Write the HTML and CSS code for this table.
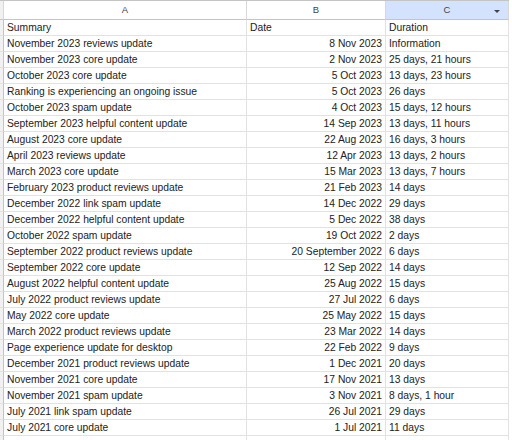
FILE: index.html
```html
<!DOCTYPE html>
<html>
<head>
<meta charset="utf-8">
<link rel="stylesheet" href="styles.css">
</head>
<body>
<div class="sheet">
  <div class="row head">
    <div class="cell stub"></div>
    <div class="cell a">A</div>
    <div class="cell b">B</div>
    <div class="cell c sel">C<span class="arrow"></span></div>
  </div>
  <div class="row"><div class="cell stub"></div><div class="cell a">Summary</div><div class="cell b left">Date</div><div class="cell c">Duration</div></div>
  <div class="row"><div class="cell stub"></div><div class="cell a">November 2023 reviews update</div><div class="cell b">8 Nov 2023</div><div class="cell c">Information</div></div>
  <div class="row"><div class="cell stub"></div><div class="cell a">November 2023 core update</div><div class="cell b">2 Nov 2023</div><div class="cell c">25 days, 21 hours</div></div>
  <div class="row"><div class="cell stub"></div><div class="cell a">October 2023 core update</div><div class="cell b">5 Oct 2023</div><div class="cell c">13 days, 23 hours</div></div>
  <div class="row"><div class="cell stub"></div><div class="cell a">Ranking is experiencing an ongoing issue</div><div class="cell b">5 Oct 2023</div><div class="cell c">26 days</div></div>
  <div class="row"><div class="cell stub"></div><div class="cell a">October 2023 spam update</div><div class="cell b">4 Oct 2023</div><div class="cell c">15 days, 12 hours</div></div>
  <div class="row"><div class="cell stub"></div><div class="cell a">September 2023 helpful content update</div><div class="cell b">14 Sep 2023</div><div class="cell c">13 days, 11 hours</div></div>
  <div class="row"><div class="cell stub"></div><div class="cell a">August 2023 core update</div><div class="cell b">22 Aug 2023</div><div class="cell c">16 days, 3 hours</div></div>
  <div class="row"><div class="cell stub"></div><div class="cell a">April 2023 reviews update</div><div class="cell b">12 Apr 2023</div><div class="cell c">13 days, 2 hours</div></div>
  <div class="row"><div class="cell stub"></div><div class="cell a">March 2023 core update</div><div class="cell b">15 Mar 2023</div><div class="cell c">13 days, 7 hours</div></div>
  <div class="row"><div class="cell stub"></div><div class="cell a">February 2023 product reviews update</div><div class="cell b">21 Feb 2023</div><div class="cell c">14 days</div></div>
  <div class="row"><div class="cell stub"></div><div class="cell a">December 2022 link spam update</div><div class="cell b">14 Dec 2022</div><div class="cell c">29 days</div></div>
  <div class="row"><div class="cell stub"></div><div class="cell a">December 2022 helpful content update</div><div class="cell b">5 Dec 2022</div><div class="cell c">38 days</div></div>
  <div class="row"><div class="cell stub"></div><div class="cell a">October 2022 spam update</div><div class="cell b">19 Oct 2022</div><div class="cell c">2 days</div></div>
  <div class="row"><div class="cell stub"></div><div class="cell a">September 2022 product reviews update</div><div class="cell b">20 September 2022</div><div class="cell c">6 days</div></div>
  <div class="row"><div class="cell stub"></div><div class="cell a">September 2022 core update</div><div class="cell b">12 Sep 2022</div><div class="cell c">14 days</div></div>
  <div class="row"><div class="cell stub"></div><div class="cell a">August 2022 helpful content update</div><div class="cell b">25 Aug 2022</div><div class="cell c">15 days</div></div>
  <div class="row"><div class="cell stub"></div><div class="cell a">July 2022 product reviews update</div><div class="cell b">27 Jul 2022</div><div class="cell c">6 days</div></div>
  <div class="row"><div class="cell stub"></div><div class="cell a">May 2022 core update</div><div class="cell b">25 May 2022</div><div class="cell c">15 days</div></div>
  <div class="row"><div class="cell stub"></div><div class="cell a">March 2022 product reviews update</div><div class="cell b">23 Mar 2022</div><div class="cell c">14 days</div></div>
  <div class="row"><div class="cell stub"></div><div class="cell a">Page experience update for desktop</div><div class="cell b">22 Feb 2022</div><div class="cell c">9 days</div></div>
  <div class="row"><div class="cell stub"></div><div class="cell a">December 2021 product reviews update</div><div class="cell b">1 Dec 2021</div><div class="cell c">20 days</div></div>
  <div class="row"><div class="cell stub"></div><div class="cell a">November 2021 core update</div><div class="cell b">17 Nov 2021</div><div class="cell c">13 days</div></div>
  <div class="row"><div class="cell stub"></div><div class="cell a">November 2021 spam update</div><div class="cell b">3 Nov 2021</div><div class="cell c">8 days, 1 hour</div></div>
  <div class="row"><div class="cell stub"></div><div class="cell a">July 2021 link spam update</div><div class="cell b">26 Jul 2021</div><div class="cell c">29 days</div></div>
  <div class="row"><div class="cell stub"></div><div class="cell a">July 2021 core update</div><div class="cell b">1 Jul 2021</div><div class="cell c">11 days</div></div>
  <div class="row"><div class="cell stub"></div><div class="cell a"></div><div class="cell b"></div><div class="cell c"></div></div>
</div>
</body>
</html>
```
FILE: styles.css
```css
html, body {
  margin: 0;
  padding: 0;
  background: #ffffff;
}
body {
  font-family: "Liberation Sans", Arial, sans-serif;
  font-size: 10.3px;
  color: #222222;
  overflow: hidden;
}
.sheet {
  border-top: 1px solid #c4c4c4;
  width: 509px;
}
.row {
  display: grid;
  grid-template-columns: 4px 243px 139px 123px;
  height: 16px;
}
.cell {
  box-sizing: border-box;
  border-right: 1px solid #e2e2e2;
  border-bottom: 1px solid #e2e2e2;
  padding: 0 3px;
  line-height: 15px;
  white-space: nowrap;
  overflow: hidden;
}
.stub {
  padding: 0;
  background: #f1f1f1;
  border-right-color: #c4c4c4;
}
.b {
  text-align: right;
}
.b.left {
  text-align: left;
}
.head {
  height: 19px;
}
.head .cell {
  text-align: center;
  font-size: 9.5px;
  color: #444444;
  line-height: 18px;
  border-bottom-color: #c4c4c4;
  border-right-color: #d8d8d8;
  position: relative;
}
.head .stub {
  background: #f1f1f1;
}
.head .sel {
  background: #d3e3fd;
}
.arrow {
  position: absolute;
  right: 8px;
  top: 9px;
  width: 0;
  height: 0;
  border-left: 3px solid transparent;
  border-right: 3px solid transparent;
  border-top: 3px solid #444444;
}
```
